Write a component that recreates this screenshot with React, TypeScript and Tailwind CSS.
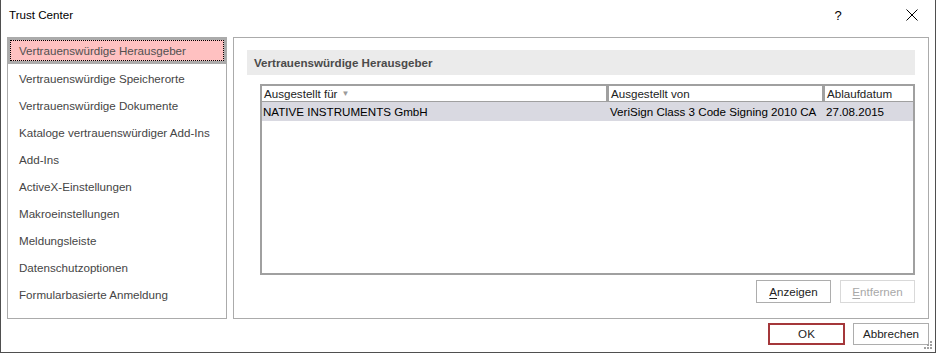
import React from "react";

const items = [
  "Vertrauenswürdige Herausgeber",
  "Vertrauenswürdige Speicherorte",
  "Vertrauenswürdige Dokumente",
  "Kataloge vertrauenswürdiger Add-Ins",
  "Add-Ins",
  "ActiveX-Einstellungen",
  "Makroeinstellungen",
  "Meldungsleiste",
  "Datenschutzoptionen",
  "Formularbasierte Anmeldung",
];

function Grip() {
  const dots: [number, number][] = [
    [6, 0],
    [3, 3],
    [6, 3],
    [0, 6],
    [3, 6],
    [6, 6],
  ];
  return (
    <svg width="9" height="9" viewBox="0 0 9 9" className="absolute right-[2px] bottom-[2px]">
      {dots.map(([x, y], i) => (
        <rect key={i} x={x} y={y} width="2" height="2" fill="#a0a0a0" />
      ))}
    </svg>
  );
}

export default function App() {
  return (
    <div className="relative w-[936px] h-[353px] bg-white border-x border-b border-[#4f4f4f] flex flex-col font-['Liberation_Sans',Arial,sans-serif] text-[11.6px] leading-none text-black overflow-hidden">
      {/* Title bar */}
      <div className="h-[30px] flex items-center pl-[8px] shrink-0">
        <span className="text-[11.6px] text-black">Trust Center</span>
        <div className="ml-auto flex items-center gap-[28px]">
          <span className="w-[46px] text-center text-[13px] text-black">?</span>
          <div className="w-[46px] flex justify-center">
            <svg width="12" height="12" viewBox="0 0 12 12">
              <path d="M0.5 0.5 L11.5 11.5 M11.5 0.5 L0.5 11.5" stroke="#000" strokeWidth="1" />
            </svg>
          </div>
        </div>
      </div>

      {/* Body */}
      <div className="flex pl-[6px] pr-[6px] pt-[7px] gap-[6px] shrink-0">
        {/* Left navigation */}
        <div className="w-[220px] h-[282px] border border-[#ababab] flex flex-col">
          {items.map((it, i) =>
            i === 0 ? (
              <div
                key={it}
                className="relative h-[27px] -mx-px -mt-px mb-px bg-[#ffc1c1] border-[3px] border-[#ababab] flex items-center pl-[9px] text-[#505050]"
              >
                <div className="absolute inset-0 border border-dotted border-black" />
                <span className="relative">{it}</span>
              </div>
            ) : (
              <div key={it} className="h-[27px] flex items-center pl-[11px] text-[#454545]">
                {it}
              </div>
            )
          )}
        </div>

        {/* Right content */}
        <div className="flex-1 h-[282px] border border-[#ababab] flex flex-col px-[13px] pt-[12px]">
          <div className="h-[25px] bg-[#ebebeb] flex items-center pl-[7px] font-bold text-[#4a4a4a]">
            Vertrauenswürdige Herausgeber
          </div>

          <div className="ml-[13px] mt-[9px] h-[191px] border-2 border-[#a0a0a0] flex flex-col">
            {/* Header */}
            <div className="h-[16px] bg-[#a0a0a0] flex gap-[3px] pb-px">
              <div className="w-[344px] bg-white flex items-center pl-[2px] text-[#222]">
                Ausgestellt für
                <span className="ml-[4px] text-[8px] text-[#9a9a9a]">▼</span>
              </div>
              <div className="w-[213px] bg-white flex items-center pl-[2px] text-[#222]">
                Ausgestellt von
              </div>
              <div className="w-[88px] bg-white flex items-center pl-[2px] text-[#222]">
                Ablaufdatum
              </div>
            </div>
            {/* Row */}
            <div className="h-[19px] bg-[#d9d9e1] flex items-center text-black">
              <div className="w-[347px] pl-px">NATIVE INSTRUMENTS GmbH</div>
              <div className="w-[216px] pl-px">VeriSign Class 3 Code Signing 2010 CA</div>
              <div className="flex-1 pl-px">27.08.2015</div>
            </div>
          </div>

          <div className="flex justify-end gap-[9px] mt-[5px]">
            <button className="w-[75px] h-[23px] border border-[#adadad] bg-white text-[#222] text-[11.6px]">
              <span className="underline underline-offset-2">A</span>nzeigen
            </button>
            <button className="w-[75px] h-[23px] border border-[#d9d9d9] bg-white text-[#a8a8a8] text-[11.6px]">
              <span className="underline underline-offset-2">E</span>ntfernen
            </button>
          </div>
        </div>
      </div>

      {/* Footer buttons */}
      <div className="flex justify-end gap-[8px] pr-[6px] pt-[4px]">
        <button className="w-[77px] h-[22px] border-2 border-[#a4373a] bg-white text-[#222] text-[11.6px]">
          OK
        </button>
        <button className="w-[76px] h-[22px] border border-[#adadad] bg-white text-[#222] text-[11.6px]">
          Abbrechen
        </button>
      </div>

      <Grip />
    </div>
  );
}
